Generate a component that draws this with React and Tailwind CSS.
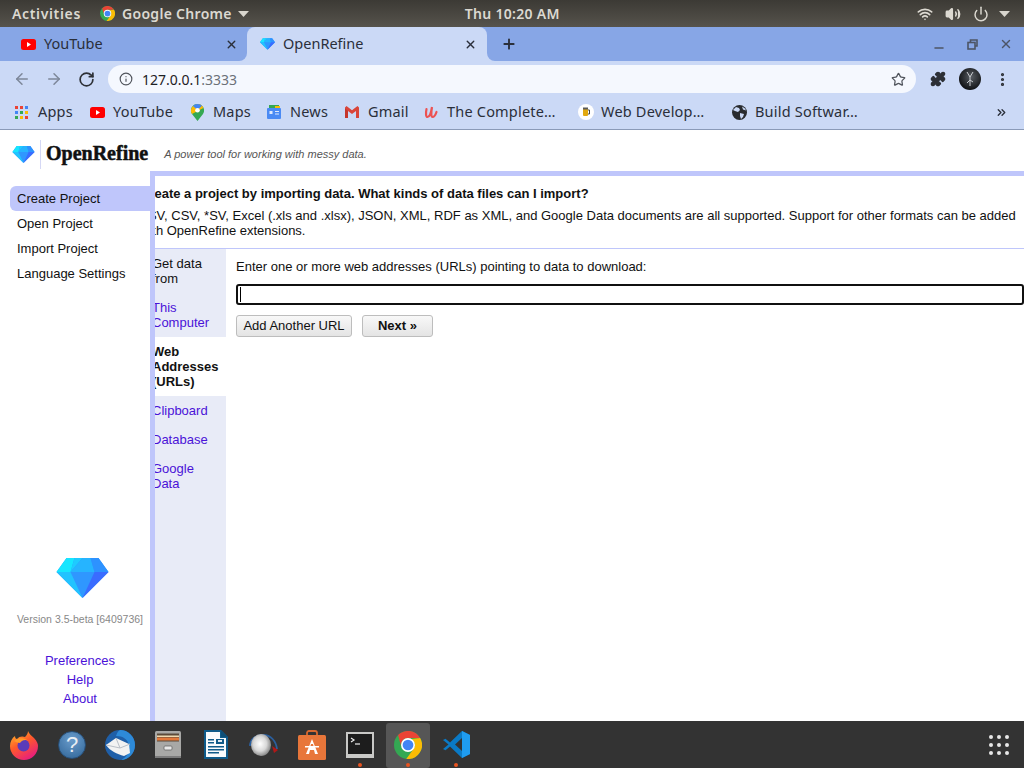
import React from "react";
import { ArrowLeft, ArrowRight, RotateCw, Info, Star, X, Plus, Minus, Puzzle, MoreVertical, ChevronsRight, Wifi, Volume2, Power } from "lucide-react";

const Caret = ({ c = "#d8d5cd" }) => (
  <svg width="11" height="6" viewBox="0 0 11 6"><path d="M0 0h11L5.500 6z" fill={c} /></svg>
);

const Chrome = ({ s = 16 }) => (
  <svg width={s} height={s} viewBox="0 0 24 24">
    <circle cx="12" cy="12" r="12" fill="#34a853" />
    <path d="M3.500 3.500A12 12 0 0 1 22.400 6H12a6 6 0 0 0-5.700 8z" fill="#ea4335" />
    <path d="M22.400 6A12 12 0 0 1 10.500 23.900L16.700 15.500A6 6 0 0 0 15 6.800z" fill="#fbbc05" />
    <circle cx="12" cy="12" r="6" fill="#fff" />
    <circle cx="12" cy="12" r="4.600" fill="#4285f4" />
  </svg>
);

const Gem = ({ w = 22, h = 17 }) => (
  <svg width={w} height={h} viewBox="0 0 52 40">
    <path d="M10 0h32l10 14L26 40 0 14z" fill="#2f97ff" />
    <path d="M10 0h8l-4 14H0z" fill="#16e6ff" />
    <path d="M18 0h8l-12 14z" fill="#1ecbff" />
    <path d="M26 0h8l4 14H14z" fill="#26b4ff" />
    <path d="M34 0h8l10 14H38z" fill="#2d92ff" />
    <path d="M0 14h14l12 26z" fill="#22c3ff" />
    <path d="M38 14h14L26 40z" fill="#3a6cff" />
  </svg>
);

const YT = () => (
  <svg width="15" height="11" viewBox="0 0 15 11">
    <rect width="15" height="11" rx="2.500" fill="#f00" />
    <path d="M6 3l4 2.500L6 8z" fill="#fff" />
  </svg>
);

const AppsIcon = () => (
  <svg width="13" height="13" viewBox="0 0 13 13">
    {[["#ea4335", "#ea4335", "#4285f4"], ["#4285f4", "#34a853", "#fbbc05"], ["#34a853", "#fbbc05", "#ea4335"]].map((row, y) =>
      row.map((c, x) => <rect key={x + "-" + y} x={x * 5} y={y * 5} width="3" height="3" fill={c} />)
    )}
  </svg>
);

const MapsIcon = () => (
  <svg width="13" height="17" viewBox="0 0 13 17">
    <path d="M6.500 0A6.500 6.500 0 0 0 1 10l5.500 7 5.500-7A6.500 6.500 0 0 0 6.500 0z" fill="#34a853" />
    <path d="M6.500 0A6.500 6.500 0 0 1 12.400 4L1 10A6.500 6.500 0 0 1 2 2z" fill="#fbbc05" />
    <path d="M2 2A6.500 6.500 0 0 1 11 1.700L6.500 6z" fill="#4285f4" />
    <circle cx="6.500" cy="6.200" r="2.300" fill="#fff" />
  </svg>
);

const NewsIcon = () => (
  <svg width="14" height="14" viewBox="0 0 14 14">
    <path d="M2 0h10v4H2z" fill="#34a853" />
    <path d="M8 1h5v3H8z" fill="#fbbc05" />
    <rect y="3" width="14" height="11" rx="1" fill="#4a8af4" />
    <path d="M2.500 6h3v3h-3zM8 6h4v1H8zM8 8.500h4v1H8z" fill="#dfe9fc" />
  </svg>
);

const GmailIcon = () => (
  <svg width="14" height="12" viewBox="0 0 14 12">
    <path d="M0 1.500V12h3V5l4 3 4-3v7h3V1.500L12.500 0 7 4.200 1.500 0z" fill="#d9453a" />
    <path d="M3 5v7H0V2.500z" fill="#c5362c" />
  </svg>
);

const UdemyIcon = () => (
  <svg width="14" height="14" viewBox="0 0 14 14" fill="none" stroke="#ec5252" strokeWidth="2.200" strokeLinecap="round">
    <path d="M2.500 4C1.500 9 2 12 3.500 12c2 0 3.500-4 4.500-10-1 6-1 10 .5 10 1.500 0 3-2 4-5" />
  </svg>
);

const BeerIcon = () => (
  <svg width="16" height="16" viewBox="0 0 16 16">
    <circle cx="8" cy="8" r="8" fill="#fff" />
    <rect x="5" y="4.500" width="5" height="7.500" rx="1" fill="#e2a90f" />
    <path d="M10 6h1.500v4H10" fill="none" stroke="#444" strokeWidth="1" />
    <rect x="5" y="3.500" width="5" height="2" fill="#5a5a5a" />
  </svg>
);

const GlobeDark = () => (
  <svg width="15" height="15" viewBox="0 0 15 15">
    <circle cx="7.500" cy="7.500" r="7.500" fill="#2a2c30" />
    <path d="M4 2l3 1 1 2-2 2-3-1-2-1zM8 8l4 1-1 3-2 2-1-3zM10 1.500l3 2 1 2-3-1z" fill="#cbd9f6" />
  </svg>
);

const Avatar = () => (
  <svg width="22" height="22" viewBox="0 0 22 22">
    <defs>
      <radialGradient id="av" cx="0.550" cy="0.400" r="0.600">
        <stop offset="0" stopColor="#585d63" />
        <stop offset="1" stopColor="#0f1114" />
      </radialGradient>
    </defs>
    <circle cx="11" cy="11" r="11" fill="url(#av)" />
    <path d="M8 4l3 5 3-5M11 9v9M11 12l-3 3M11 12l3 2" fill="none" stroke="#c9ccd0" strokeWidth="1" />
  </svg>
);

const Firefox = () => (
  <svg width="30" height="30" viewBox="0 0 30 30">
    <defs>
      <linearGradient id="ff" x1="0" y1="0" x2="0.600" y2="1">
        <stop offset="0" stopColor="#ffc22a" />
        <stop offset="0.500" stopColor="#ff5a2a" />
        <stop offset="1" stopColor="#e8207a" />
      </linearGradient>
    </defs>
    <path d="M19 1c1 3 4 5 6 7 3 3 4 6 4 8a14 14 0 0 1-28 0C1 12 3 8 6 6c0 2 1 3 2 3 2-3 6-3 8-2 2-2 3-4 3-6z" fill="url(#ff)" />
    <circle cx="14.500" cy="15.500" r="6" fill="#5b3bb8" />
    <path d="M5 11c3-3 9-4 13-1-4-.5-6 1-7 3-2 0-4-1-6-2z" fill="#ff9a2a" />
  </svg>
);

const Help = () => (
  <div className="w-7 h-7 rounded-full bg-[radial-gradient(circle_at_50%_30%,#6a9ccc,#2f6496)] flex items-center justify-center text-[#e9eef3] font-normal text-[22px] leading-none font-['Liberation_Sans',sans-serif] border border-[#274f78]">?</div>
);

const Thunderbird = () => (
  <svg width="30" height="30" viewBox="0 0 30 30">
    <circle cx="15" cy="15" r="15" fill="#1f5fa8" />
    <path d="M15 0a15 15 0 0 1 15 15c0 8-6 15-14 15 6-3 9-8 8-14C23 9 18 6 11 6c1-3 2-5 4-6z" fill="#2e8ad8" />
    <path d="M1 15l10-7 13 6 1 9-6 3C12 24 5 21 1 15z" fill="#f2f2f2" />
    <path d="M11 8l4 10 10-4M1 15l14 3" fill="none" stroke="#b9bfc7" strokeWidth="1" />
  </svg>
);

const Files = () => (
  <svg width="26" height="27" viewBox="0 0 26 27">
    <rect width="26" height="27" rx="1.500" fill="#a8a8a6" />
    <rect x="2" y="2.500" width="22" height="8" fill="#5b4a3a" />
    <rect x="2" y="4.500" width="22" height="1.500" fill="#f0d9b0" />
    <rect x="2" y="6.500" width="22" height="3" fill="#e2783a" />
    <rect x="9" y="15" width="8" height="4" rx="1" fill="#e8e8e8" stroke="#666" strokeWidth=".8" />
    <rect y="25" width="26" height="2" fill="#7c7c7c" />
  </svg>
);

const Writer = () => (
  <svg width="24" height="29" viewBox="0 0 24 29">
    <path d="M0 0h17l7 7v22H0z" fill="#0f5b8a" />
    <path d="M2 2h14v6h6v19H2z" fill="#f8fbfd" />
    <path d="M17 0l7 7h-7z" fill="#0d4f78" />
    <path d="M4 9h6v1.500H4zM4 12h6v1.500H4zM12 9h8v5h-8zM4 16h16v1.500H4zM4 19h16v1.500H4zM4 22h11v1.500H4z" fill="#0f5b8a" />
    <rect x="14" y="10" width="4" height="2" fill="#dfe9f0" />
  </svg>
);

const Disk = () => (
  <svg width="30" height="28" viewBox="0 0 30 28">
    <defs>
      <radialGradient id="dk" cx="0.450" cy="0.450" r="0.600">
        <stop offset="0" stopColor="#ffffff" />
        <stop offset="0.550" stopColor="#d8d8d8" />
        <stop offset="1" stopColor="#7a7a7a" />
      </radialGradient>
    </defs>
    <path d="M1 15C1 9 6 4 14 4s13 6 14 14" fill="none" stroke="#2b5f9e" strokeWidth="1.800" />
    <ellipse cx="12" cy="14" rx="10" ry="11" fill="url(#dk)" />
    <path d="M23 15l6 4-4 3z" fill="#b01818" />
  </svg>
);

const Store = () => (
  <svg width="28" height="30" viewBox="0 0 28 30">
    <path d="M9 5V3a2 2 0 0 1 2-2h6a2 2 0 0 1 2 2v2" fill="none" stroke="#d9682f" strokeWidth="1.800" />
    <rect y="5" width="28" height="25" rx="1.500" fill="#e8763a" />
    <path d="M14 9l6 15h-3l-1-4h-4l-1 4H8z" fill="#fff" />
    <path d="M7 16h14v1.500H7z" fill="#fff" />
    <path d="M13 14h2l.5 2h-3z" fill="#e8763a" />
  </svg>
);

const Terminal = () => (
  <svg width="28" height="26" viewBox="0 0 28 26">
    <rect width="28" height="26" fill="#c9c9c7" />
    <rect x="2" y="2" width="24" height="20" fill="#1d1d1d" />
    <path d="M5 6l3 2-3 2" fill="none" stroke="#eee" strokeWidth="1.200" />
    <path d="M9 12h5" stroke="#eee" strokeWidth="1.200" />
  </svg>
);

const VSCode = () => (
  <svg width="27" height="27" viewBox="0 0 27 27">
    <path d="M19 0l8 4v19l-8 4L7 15.500l-4.500 3.700L0 18l5.500-4.500L0 9l2.500-1.200L7 11.500z" fill="#0a7ac6" />
    <path d="M19 0l8 4v19l-8 4z" fill="#1f9cf0" />
    <path d="M19 7l-7 6.500 7 6.500z" fill="#333" />
  </svg>
);

const bookmarks = [
  { w: "w-[75px]", gap: "gap-[10px]", icon: <AppsIcon />, t: "Apps" },
  { w: "w-[101px]", gap: "gap-[8px]", icon: <YT />, t: "YouTube" },
  { w: "w-[76px]", gap: "gap-[9px]", icon: <MapsIcon />, t: "Maps" },
  { w: "w-[78px]", gap: "gap-[9px]", icon: <NewsIcon />, t: "News" },
  { w: "w-[79px]", gap: "gap-[9px]", icon: <GmailIcon />, t: "Gmail" },
  { w: "w-[154px]", gap: "gap-[9px]", icon: <UdemyIcon />, t: "The Complete…" },
  { w: "w-[154px]", gap: "gap-[7px]", icon: <BeerIcon />, t: "Web Develop…" },
  { w: "w-[250px]", gap: "gap-[8px]", icon: <GlobeDark />, t: "Build Softwar…" },
];

const dock = [
  { i: <Firefox /> }, { i: <Help /> }, { i: <Thunderbird /> }, { i: <Files /> }, { i: <Writer /> },
  { i: <Disk /> }, { i: <Store /> }, { i: <Terminal />, dot: true },
  { i: <Chrome s={28} />, dot: true, active: true }, { i: <VSCode />, dot: true },
];

export default function App() {
  return (
    <div className="w-[1024px] h-[768px] overflow-hidden flex flex-col bg-white font-['Liberation_Sans',sans-serif] text-[13px] text-[#111]">
      {/* system bar */}
      <div className="h-[27px] shrink-0 flex items-center pl-3 pr-[14px] bg-gradient-to-b from-[#3c3a35] to-[#56534c] text-[#dcd9d1] font-['Noto_Sans',sans-serif] text-[14px] font-semibold tracking-[0.3px]">
        <span className="w-[88px] tracking-[0.65px]">Activities</span>
        <Chrome s={15} />
        <span className="ml-[7px] mr-[6px]">Google Chrome</span>
        <Caret />
        <span className="ml-[216px]">Thu 10:20 AM</span>
        <div className="ml-auto flex items-center">
          <Wifi size={16} strokeWidth={2.500} />
          <Volume2 size={16} strokeWidth={2.200} fill="#dcd9d1" className="ml-[12px]" />
          <Power size={16} strokeWidth={2.200} className="ml-[12px]" />
          <span className="ml-[10px]"><Caret /></span>
        </div>
      </div>

      {/* tabs */}
      <div className="h-[34px] shrink-0 flex bg-[#cbd9f6] text-[#2a2f3a] font-['Noto_Sans',sans-serif] text-[14.500px]">
        <div className="w-[247px] flex items-center pl-[21px] pr-[9px] bg-[#87a6e6] rounded-br-lg">
          <YT />
          <span className="ml-[8px]">YouTube</span>
          <X size={13} strokeWidth={2.500} className="ml-auto" />
        </div>
        <div className="w-[240px] flex items-center pl-[13px] pr-[10px] bg-[#87a6e6]">
          <div className="-ml-[13px] -mr-[10px] w-[240px] h-full flex items-center pl-[13px] pr-[10px] bg-[#cbd9f6] rounded-t-lg">
            <Gem w={15} h={12} />
            <span className="ml-[8px]">OpenRefine</span>
            <X size={13} strokeWidth={2.500} className="ml-auto" />
          </div>
        </div>
        <div className="flex-1 flex items-center bg-[#87a6e6] rounded-bl-lg">
          <Plus size={16} strokeWidth={2.800} className="ml-[14px]" />
          <div className="ml-auto flex items-center pr-[11px] text-[#4d5566]">
            <Minus size={14} strokeWidth={2.200} className="mt-[7px]" />
            <svg width="11" height="11" viewBox="0 0 11 11" className="ml-[21px]" fill="none" stroke="#4d5566" strokeWidth="1.600"><path d="M3.500 3V1h6.500v6H8" /><rect x="1" y="3.500" width="7" height="6.500" /></svg>
            <X size={14} strokeWidth={2.400} className="ml-[21px]" />
          </div>
        </div>
      </div>

      {/* toolbar */}
      <div className="h-[34px] shrink-0 flex items-center bg-[#cbd9f6] pt-[2px] pl-[13px] pr-[13px]">
        <ArrowLeft size={18} color="#7d8799" strokeWidth={2} />
        <ArrowRight size={18} color="#7d8799" strokeWidth={2} className="ml-[14px]" />
        <RotateCw size={17} color="#2d3036" strokeWidth={2.400} className="ml-[15px]" />
        <div className="ml-[13px] w-[808px] h-[28px] rounded-full bg-[#f5f8fe] flex items-center pl-[11px] pr-[10px]">
          <Info size={14} color="#50545c" strokeWidth={2} />
          <span className="ml-[9px] font-['Noto_Sans',sans-serif] text-[14px] text-[#1f2125]">127.0.0.1<span className="text-[#6c7078]">:3333</span></span>
          <Star size={15} color="#50545c" strokeWidth={2} className="ml-auto" />
        </div>
        <Puzzle size={16} color="#2d3036" fill="#2d3036" className="ml-[14px]" />
        <div className="ml-[13px]"><Avatar /></div>
        <MoreVertical size={17} color="#2d3036" strokeWidth={2.500} className="ml-[13px]" />
      </div>

      {/* bookmarks */}
      <div className="h-[35px] shrink-0 flex items-center bg-[#cbd9f6] border-b border-[#8a9ab8] pl-[15px] pr-[16px] font-['Noto_Sans',sans-serif] text-[14.500px] tracking-[0.2px] text-[#2a2f3a]">
        {bookmarks.map((b) => (
          <div key={b.t} className={"flex items-center shrink-0 " + b.w + " " + b.gap}>
            {b.icon}
            <span>{b.t}</span>
          </div>
        ))}
        <ChevronsRight size={13} strokeWidth={2.500} className="ml-auto" />
      </div>

      {/* OpenRefine header */}
      <div className="h-[41px] shrink-0 flex items-center pl-[12px] pt-[8px]">
        <Gem w={23} h={17} />
        <div className="ml-[5px] w-px h-[29px] bg-[#d5d8f5]" />
        <span className="-mt-[3px] ml-[5px] font-['Liberation_Serif',serif] font-bold text-[20px] text-[#111] [-webkit-text-stroke:0.5px_#111]">OpenRefine</span>
        <span className="-mt-[1px] ml-[16px] italic text-[11px] text-[#555]">A power tool for working with messy data.</span>
      </div>

      {/* body */}
      <div className="flex-1 min-h-0 flex">
        <div className="w-[150px] shrink-0 flex flex-col pl-[10px] pt-[15px] pb-[13px]">
          <div className="h-[25px] flex items-center pl-[7px] bg-[#bfc6fb] rounded-l-md">Create Project</div>
          <div className="h-[25px] flex items-center pl-[7px]">Open Project</div>
          <div className="h-[25px] flex items-center pl-[7px]">Import Project</div>
          <div className="h-[25px] flex items-center pl-[7px]">Language Settings</div>
          <div className="mt-auto flex flex-col items-center">
            <span className="ml-[4px]"><Gem w={53} h={40} /></span>
            <div className="mt-[14px] text-[10.500px] text-[#888] whitespace-nowrap">Version 3.5-beta [6409736]</div>
            <div className="mt-[23px] flex flex-col items-center leading-[19px] text-[#4a12d8]">
              <span>Preferences</span>
              <span>Help</span>
              <span>About</span>
            </div>
          </div>
        </div>

        <div className="flex-1 min-w-0 border-l-[5px] border-t-[5px] border-[#bfc6fb] overflow-hidden flex flex-col">
          <div className="h-[73px] shrink-0 border-b border-[#bfc6fb] -ml-[15px] w-[884px] pt-[10px]">
            <div className="font-bold leading-[15px]">Create a project by importing data. What kinds of data files can I import?</div>
            <div className="mt-[7px] leading-[15px]">TSV, CSV, *SV, Excel (.xls and .xlsx), JSON, XML, RDF as XML, and Google Data documents are all supported. Support for other formats can be added with OpenRefine extensions.</div>
          </div>
          <div className="flex-1 min-h-0 flex">
            <div className="w-[71px] shrink-0 bg-[#e8ebf7] flex flex-col leading-[15px] text-[#4a12d8]">
              <div className="-ml-[3px] pt-[7px] pb-[7px] text-[#111]">Get data<br />from</div>
              <div className="-ml-[3px] pt-[7px] pb-[7px]">This<br />Computer</div>
              <div className="bg-white font-bold text-[#111] pt-[7px] pb-[7px]"><div className="-ml-[3px]">Web<br />Addresses<br />(URLs)</div></div>
              <div className="-ml-[3px] pt-[7px] pb-[7px]">Clipboard</div>
              <div className="-ml-[3px] pt-[7px] pb-[7px]">Database</div>
              <div className="-ml-[3px] pt-[7px] pb-[7px]">Google<br />Data</div>
            </div>
            <div className="flex-1 min-w-0 pl-[10px] pt-[10px] flex flex-col items-start">
              <div className="leading-[15px]">Enter one or more web addresses (URLs) pointing to data to download:</div>
              <div className="mt-[10px] w-[788px] h-[21px] border-[2px] border-[#101010] rounded-[3px] flex items-center pl-[2px]">
                <div className="w-px h-[15px] bg-black" />
              </div>
              <div className="mt-[10px] flex gap-[10px]">
                <button className="h-[22px] w-[116px] border border-[#bdbdbd] rounded-[3px] bg-gradient-to-b from-[#f8f8f8] to-[#e4e4e4] text-[13px] text-[#111]">Add Another URL</button>
                <button className="h-[22px] w-[71px] border border-[#bdbdbd] rounded-[3px] bg-gradient-to-b from-[#f8f8f8] to-[#e4e4e4] text-[13px] font-bold text-[#111]">Next »</button>
              </div>
            </div>
          </div>
        </div>
      </div>

      {/* dock */}
      <div className="h-[47px] shrink-0 bg-[#333333] flex items-center">
        {dock.map((d, n) => (
          <div key={n} className="w-[48px] h-[47px] flex items-center justify-center relative">
            {d.active && <div className="absolute inset-x-[2px] top-[2px] bottom-0 bg-[#565656] rounded-[3px]" />}
            <div className="relative">{d.i}</div>
            {d.dot && <div className="absolute bottom-[1px] left-[22px] w-[4px] h-[4px] rounded-full bg-[#e95420]" />}
          </div>
        ))}
        <div className="ml-auto mr-[15px] grid grid-cols-3 gap-[4px]">
          {[0, 1, 2, 3, 4, 5, 6, 7, 8].map((k) => (
            <div key={k} className="w-[4px] h-[4px] rounded-full bg-[#e8e8e8]" />
          ))}
        </div>
      </div>
    </div>
  );
}
